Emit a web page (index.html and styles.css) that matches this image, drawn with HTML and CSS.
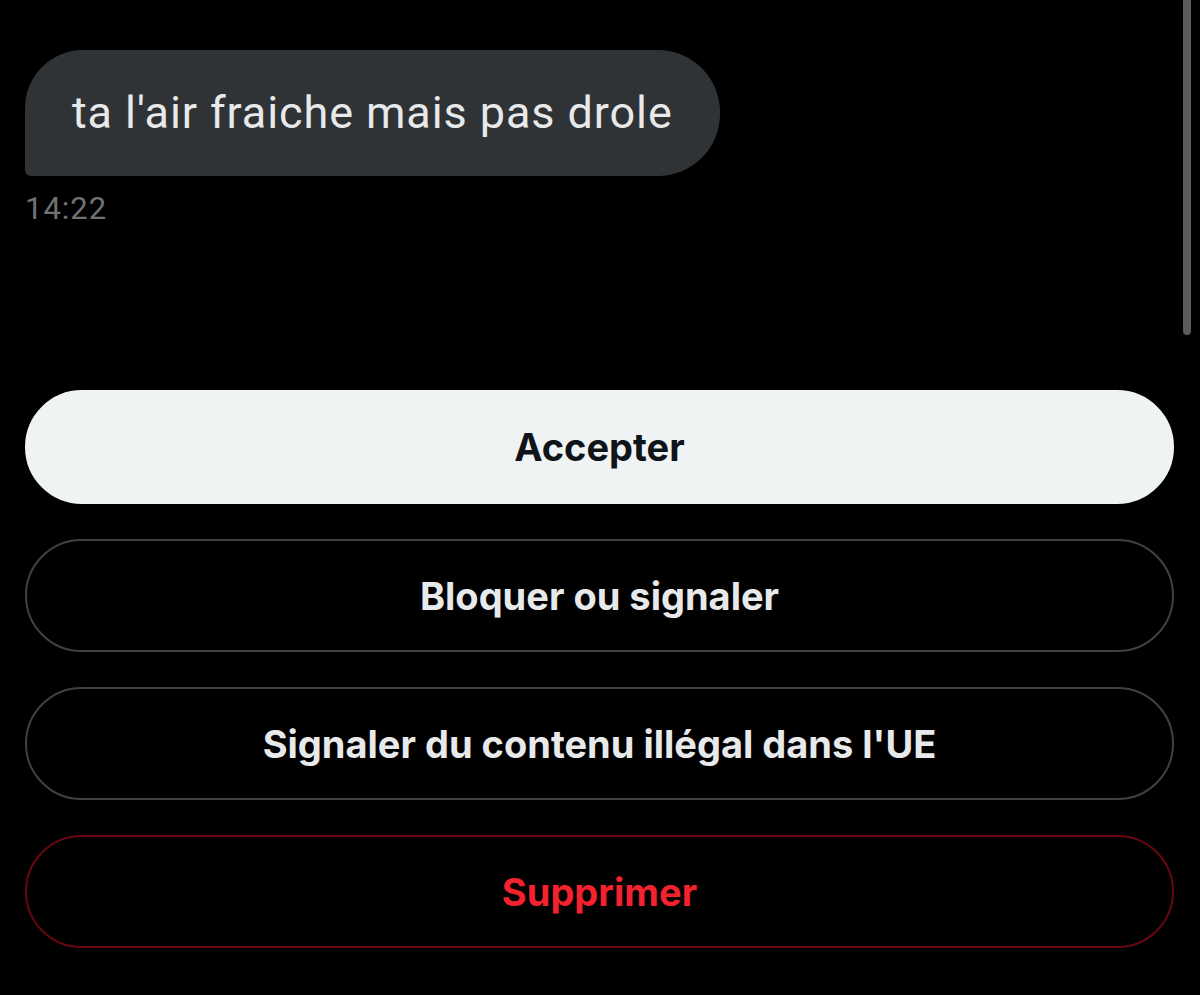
FILE: index.html
```html
<!DOCTYPE html>
<html lang="fr">
<head>
    <meta charset="UTF-8">
    <meta name="viewport" content="width=device-width, initial-scale=1.0">
    <title>Messages</title>
    <link rel="stylesheet" href="styles.css">
</head>
<body>
    <div class="scrollbar"></div>
    <div class="container">
        <section class="thread">
            <div class="bubble">ta l'air fraiche mais pas drole</div>
            <div class="time">14:22</div>
        </section>

        <section class="actions">
            <button class="btn btn-primary">Accepter</button>
            <button class="btn">Bloquer ou signaler</button>
            <button class="btn">Signaler du contenu illégal dans l'UE</button>
            <button class="btn btn-danger">Supprimer</button>
        </section>
    </div>
</body>
</html>
```

FILE: styles.css
```css
* {
    margin: 0;
    padding: 0;
    box-sizing: border-box;
}

body {
    background: #000;
    color: #e7e9ea;
    font-family: Roboto, 'Noto Sans', sans-serif;
    min-height: 100vh;
    overflow: hidden;
}

.container {
    padding: 50px 26px 0 25px;
}

.scrollbar {
    position: absolute;
    top: 0;
    right: 9px;
    width: 8px;
    height: 335px;
    background: #5b5b5b;
    border-radius: 0 0 4px 4px;
}

.thread {
    display: flex;
    flex-direction: column;
    align-items: flex-start;
}

.bubble {
    background: #2f3336;
    color: #e7e9ea;
    font-size: 45px;
    letter-spacing: 0.9px;
    line-height: 126px;
    height: 126px;
    padding: 0 47px 0 47px;
    border-radius: 58px 62px 62px 6px;
}

.time {
    color: #6f7275;
    font-size: 31px;
    letter-spacing: 1px;
    margin-top: 14px;
    line-height: 38px;
}

.actions {
    display: flex;
    flex-direction: column;
    gap: 35px;
    margin-top: 162px;
}

.btn {
    height: 113px;
    border-radius: 57px;
    border: 2px solid #3e4145;
    background: #000;
    color: #e7e9ea;
    font-family: Inter, 'Noto Sans', sans-serif;
    font-weight: 700;
    font-size: 38px;
    cursor: pointer;
}

.btn-primary {
    height: 114px;
    background: #eff3f4;
    border-color: #eff3f4;
    color: #0f1419;
}

.btn-danger {
    border-color: #67070f;
    color: #f4212e;
}
```
